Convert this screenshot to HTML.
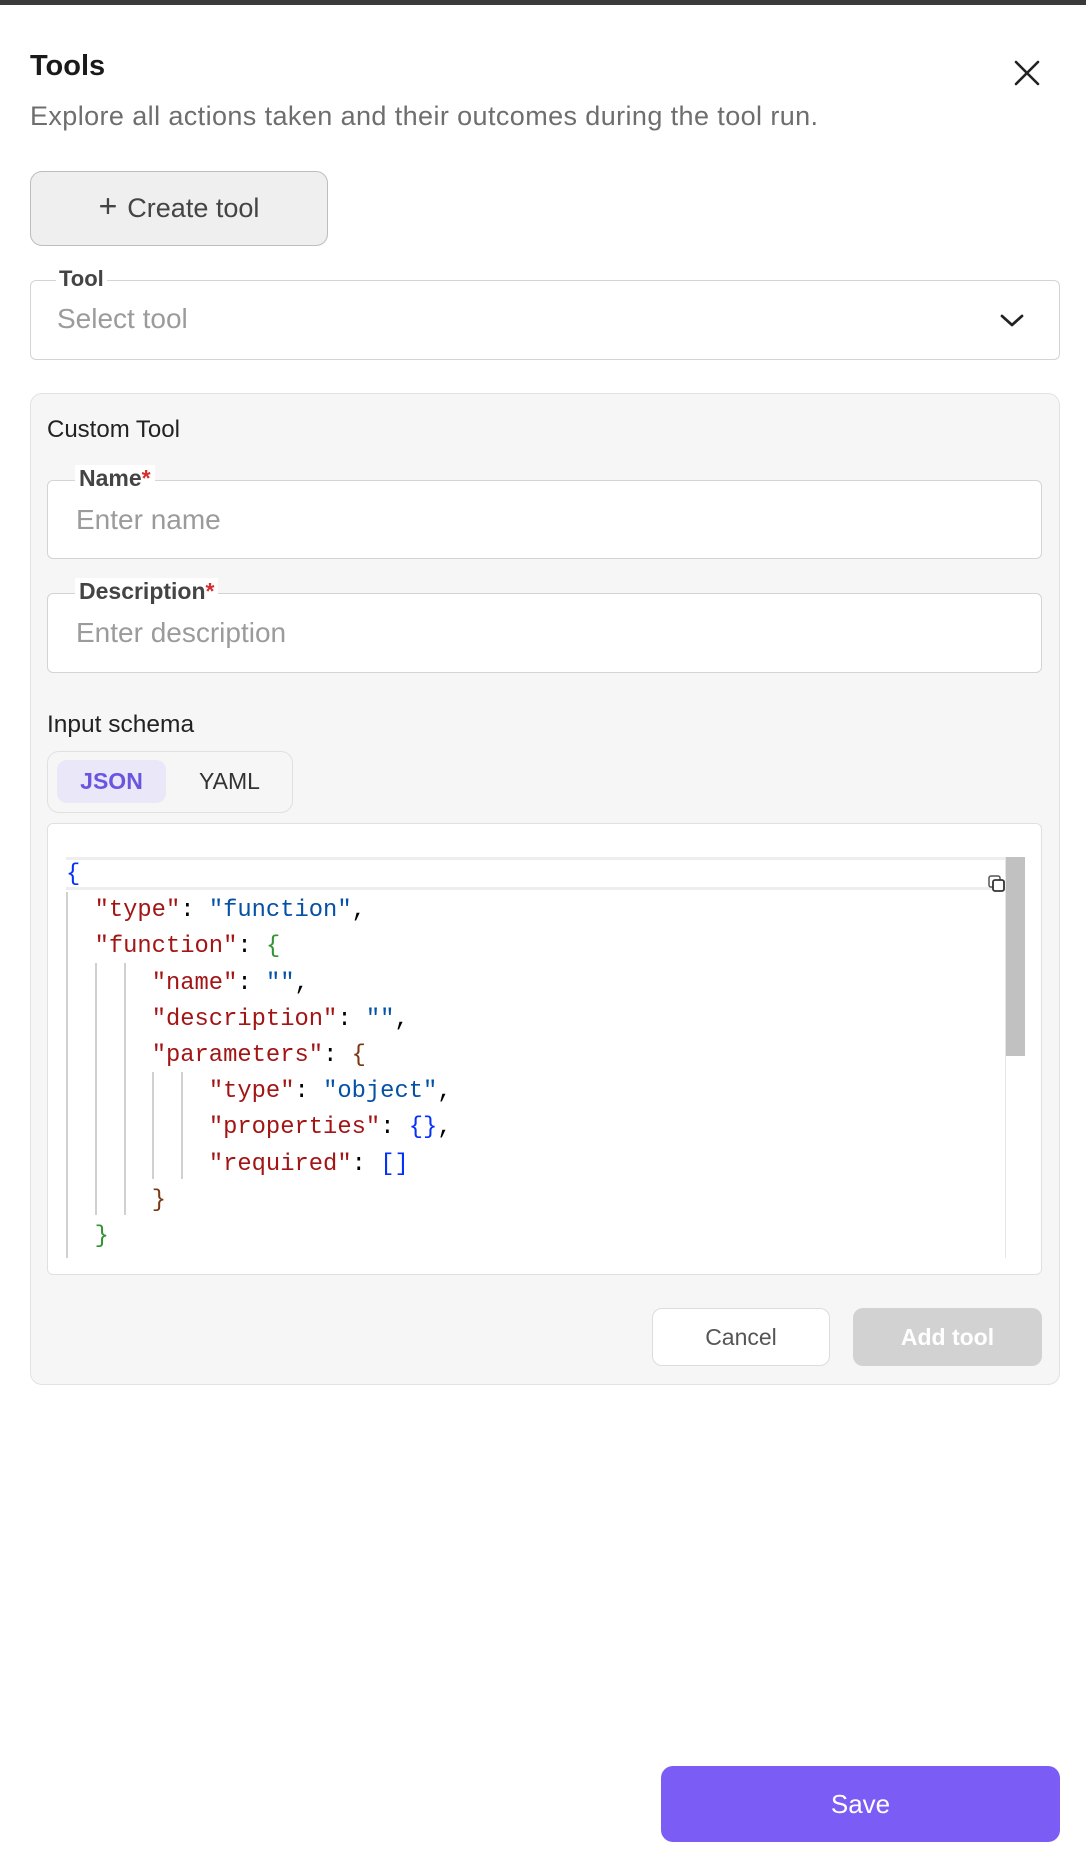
<!DOCTYPE html>
<html><head><meta charset="utf-8"><style>
*{box-sizing:border-box;margin:0;padding:0}
body{width:1086px;height:1867px;background:#fff;font-family:"Liberation Sans",sans-serif;position:relative;overflow:hidden}
.a{position:absolute}
.topbar{left:0;top:0;width:1086px;height:5px;background:#3a3a3a}
.title{left:30px;top:50px;font-size:29px;font-weight:bold;color:#1a1a1a}
.sub{left:30px;top:101px;font-size:27px;color:#6e6e6e;letter-spacing:0.4px}
.create{left:30px;top:171px;width:298px;height:75px;background:#efefef;border:1.5px solid #bdbdbd;border-radius:12px;font-size:27px;color:#444;display:flex;align-items:center;justify-content:center}
.field{border:1.5px solid #d4d4d4;border-radius:6px;background:#fff}
.lbl{font-size:23px;font-weight:bold;color:#444;background:#fff;padding:0 3px}
.ph{font-size:28px;color:#9b9b9b}
.panel{left:30px;top:393px;width:1030px;height:992px;background:#f6f6f6;border:1.5px solid #e2e2e2;border-radius:12px}
.mono{font-family:"Liberation Mono",monospace;font-size:23.8px;white-space:pre;line-height:36.2px}
.k{color:#a31515}.s{color:#0451a5}.b1{color:#0431fa}.b2{color:#319331}.b3{color:#7b3814}
.guide{position:absolute;width:1.5px;background:#d0d0d0}
</style></head><body>
<div class="a topbar"></div>
<div class="a title">Tools</div>
<svg class="a" style="left:1012px;top:58px" width="30" height="30" viewBox="0 0 30 30"><path d="M4 4L26 26M26 4L4 26" stroke="#222" stroke-width="2.6" stroke-linecap="round"/></svg>
<div class="a sub">Explore all actions taken and their outcomes during the tool run.</div>
<div class="a create"><span style="font-size:32px;font-weight:300;margin-right:10px;margin-top:-4px">+</span>Create tool</div>

<div class="a field" style="left:30px;top:280px;width:1030px;height:80px"></div>
<div class="a lbl" style="left:56px;top:266px;font-size:22px;color:#444">Tool</div>
<div class="a ph" style="left:57px;top:303px">Select tool</div>
<svg class="a" style="left:998px;top:312px" width="28" height="16" viewBox="0 0 28 16"><path d="M4 4L14 13L24 4" stroke="#222" stroke-width="2.8" fill="none" stroke-linecap="round" stroke-linejoin="round"/></svg>

<div class="a panel"></div>
<div class="a" style="left:47px;top:416px;font-size:24px;color:#222">Custom Tool</div>

<div class="a field" style="left:47px;top:480px;width:995px;height:79px"></div>
<div class="a lbl" style="left:75px;top:465px;padding:0 4px">Name<span style="color:#d32f2f">*</span></div>
<div class="a ph" style="left:76px;top:504px">Enter name</div>

<div class="a field" style="left:47px;top:593px;width:995px;height:80px"></div>
<div class="a lbl" style="left:75px;top:578px;padding:0 4px">Description<span style="color:#d32f2f">*</span></div>
<div class="a ph" style="left:76px;top:617px">Enter description</div>

<div class="a" style="left:47px;top:711px;font-size:24.5px;color:#222">Input schema</div>
<div class="a" style="left:47px;top:751px;width:246px;height:62px;border:1.5px solid #e0e0e0;border-radius:12px;background:#f6f6f6"></div>
<div class="a" style="left:57px;top:760px;width:109px;height:43px;background:#e9e7f8;border-radius:10px;color:#6a55e0;font-weight:bold;font-size:23px;display:flex;align-items:center;justify-content:center">JSON</div>
<div class="a" style="left:199px;top:760px;height:43px;font-size:23px;color:#333;display:flex;align-items:center">YAML</div>

<div class="a" style="left:47px;top:823px;width:995px;height:452px;background:#fff;border:1.5px solid #e0e0e0;border-radius:6px"></div>
<div class="a" style="left:66px;top:857px;width:959px;height:33px;border-top:3px solid #eee;border-bottom:3px solid #eee"></div>
<div class="a" style="left:1005px;top:857px;width:20px;height:199px;background:#c1c1c1"></div>
<div class="a" style="left:1005px;top:857px;width:1px;height:401px;background:#e6e6e6"></div>
<svg class="a" style="left:987px;top:874px" width="20" height="20" viewBox="0 0 20 20"><rect x="2" y="2" width="11" height="11" rx="2" fill="none" stroke="#555" stroke-width="1.5"/><rect x="6" y="6" width="11" height="11" rx="2" fill="#fff" stroke="#333" stroke-width="1.8"/></svg>
<div class="guide" style="left:66px;top:892px;height:366px"></div>
<div class="guide" style="left:95px;top:963px;height:252px"></div>
<div class="guide" style="left:124px;top:963px;height:252px"></div>
<div class="guide" style="left:152px;top:1072px;height:107px"></div>
<div class="guide" style="left:181px;top:1072px;height:107px"></div>
<div class="a mono" style="left:66px;top:857px"><span class="b1">{</span>
  <span class="k">"type"</span>: <span class="s">"function"</span>,
  <span class="k">"function"</span>: <span class="b2">{</span>
      <span class="k">"name"</span>: <span class="s">""</span>,
      <span class="k">"description"</span>: <span class="s">""</span>,
      <span class="k">"parameters"</span>: <span class="b3">{</span>
          <span class="k">"type"</span>: <span class="s">"object"</span>,
          <span class="k">"properties"</span>: <span class="b1">{}</span>,
          <span class="k">"required"</span>: <span class="b1">[]</span>
      <span class="b3">}</span>
  <span class="b2">}</span></div>

<div class="a" style="left:652px;top:1308px;width:178px;height:58px;background:#fff;border:1.5px solid #dcdcdc;border-radius:10px;font-size:23px;color:#555;display:flex;align-items:center;justify-content:center">Cancel</div>
<div class="a" style="left:853px;top:1308px;width:189px;height:58px;background:#d2d2d2;border-radius:10px;font-size:23px;font-weight:bold;color:#fff;display:flex;align-items:center;justify-content:center">Add tool</div>

<div class="a" style="left:661px;top:1766px;width:399px;height:76px;background:#7b5cf5;border-radius:12px;font-size:26px;color:#fff;display:flex;align-items:center;justify-content:center">Save</div>
</body></html>
